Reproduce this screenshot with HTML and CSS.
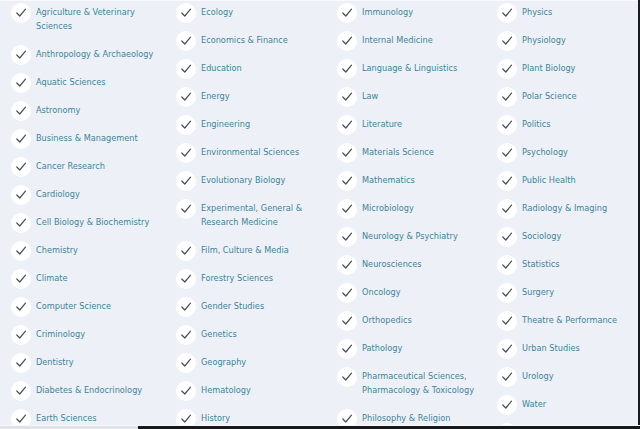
FILE: index.html
```html
<!DOCTYPE html>
<html>
<head>
<meta charset="utf-8">
<link rel="stylesheet" href="styles.css">
</head>
<body>
<div class="frame">
  <div class="viewport">
    <div class="grid">
      <ul class="col">
        <li><span class="tick"><svg viewBox="0 0 20 20"><path d="M5.8 10 L8.8 13 L14.5 6.2"/></svg></span><span class="label">Agriculture &amp; Veterinary Sciences</span></li>
        <li><span class="tick"><svg viewBox="0 0 20 20"><path d="M5.8 10 L8.8 13 L14.5 6.2"/></svg></span><span class="label">Anthropology &amp; Archaeology</span></li>
        <li><span class="tick"><svg viewBox="0 0 20 20"><path d="M5.8 10 L8.8 13 L14.5 6.2"/></svg></span><span class="label">Aquatic Sciences</span></li>
        <li><span class="tick"><svg viewBox="0 0 20 20"><path d="M5.8 10 L8.8 13 L14.5 6.2"/></svg></span><span class="label">Astronomy</span></li>
        <li><span class="tick"><svg viewBox="0 0 20 20"><path d="M5.8 10 L8.8 13 L14.5 6.2"/></svg></span><span class="label">Business &amp; Management</span></li>
        <li><span class="tick"><svg viewBox="0 0 20 20"><path d="M5.8 10 L8.8 13 L14.5 6.2"/></svg></span><span class="label">Cancer Research</span></li>
        <li><span class="tick"><svg viewBox="0 0 20 20"><path d="M5.8 10 L8.8 13 L14.5 6.2"/></svg></span><span class="label">Cardiology</span></li>
        <li><span class="tick"><svg viewBox="0 0 20 20"><path d="M5.8 10 L8.8 13 L14.5 6.2"/></svg></span><span class="label">Cell Biology &amp; Biochemistry</span></li>
        <li><span class="tick"><svg viewBox="0 0 20 20"><path d="M5.8 10 L8.8 13 L14.5 6.2"/></svg></span><span class="label">Chemistry</span></li>
        <li><span class="tick"><svg viewBox="0 0 20 20"><path d="M5.8 10 L8.8 13 L14.5 6.2"/></svg></span><span class="label">Climate</span></li>
        <li><span class="tick"><svg viewBox="0 0 20 20"><path d="M5.8 10 L8.8 13 L14.5 6.2"/></svg></span><span class="label">Computer Science</span></li>
        <li><span class="tick"><svg viewBox="0 0 20 20"><path d="M5.8 10 L8.8 13 L14.5 6.2"/></svg></span><span class="label">Criminology</span></li>
        <li><span class="tick"><svg viewBox="0 0 20 20"><path d="M5.8 10 L8.8 13 L14.5 6.2"/></svg></span><span class="label">Dentistry</span></li>
        <li><span class="tick"><svg viewBox="0 0 20 20"><path d="M5.8 10 L8.8 13 L14.5 6.2"/></svg></span><span class="label">Diabetes &amp; Endocrinology</span></li>
        <li><span class="tick"><svg viewBox="0 0 20 20"><path d="M5.8 10 L8.8 13 L14.5 6.2"/></svg></span><span class="label">Earth Sciences</span></li>
      </ul>
      <ul class="col">
        <li><span class="tick"><svg viewBox="0 0 20 20"><path d="M5.8 10 L8.8 13 L14.5 6.2"/></svg></span><span class="label">Ecology</span></li>
        <li><span class="tick"><svg viewBox="0 0 20 20"><path d="M5.8 10 L8.8 13 L14.5 6.2"/></svg></span><span class="label">Economics &amp; Finance</span></li>
        <li><span class="tick"><svg viewBox="0 0 20 20"><path d="M5.8 10 L8.8 13 L14.5 6.2"/></svg></span><span class="label">Education</span></li>
        <li><span class="tick"><svg viewBox="0 0 20 20"><path d="M5.8 10 L8.8 13 L14.5 6.2"/></svg></span><span class="label">Energy</span></li>
        <li><span class="tick"><svg viewBox="0 0 20 20"><path d="M5.8 10 L8.8 13 L14.5 6.2"/></svg></span><span class="label">Engineering</span></li>
        <li><span class="tick"><svg viewBox="0 0 20 20"><path d="M5.8 10 L8.8 13 L14.5 6.2"/></svg></span><span class="label">Environmental Sciences</span></li>
        <li><span class="tick"><svg viewBox="0 0 20 20"><path d="M5.8 10 L8.8 13 L14.5 6.2"/></svg></span><span class="label">Evolutionary Biology</span></li>
        <li><span class="tick"><svg viewBox="0 0 20 20"><path d="M5.8 10 L8.8 13 L14.5 6.2"/></svg></span><span class="label">Experimental, General &amp; Research Medicine</span></li>
        <li><span class="tick"><svg viewBox="0 0 20 20"><path d="M5.8 10 L8.8 13 L14.5 6.2"/></svg></span><span class="label">Film, Culture &amp; Media</span></li>
        <li><span class="tick"><svg viewBox="0 0 20 20"><path d="M5.8 10 L8.8 13 L14.5 6.2"/></svg></span><span class="label">Forestry Sciences</span></li>
        <li><span class="tick"><svg viewBox="0 0 20 20"><path d="M5.8 10 L8.8 13 L14.5 6.2"/></svg></span><span class="label">Gender Studies</span></li>
        <li><span class="tick"><svg viewBox="0 0 20 20"><path d="M5.8 10 L8.8 13 L14.5 6.2"/></svg></span><span class="label">Genetics</span></li>
        <li><span class="tick"><svg viewBox="0 0 20 20"><path d="M5.8 10 L8.8 13 L14.5 6.2"/></svg></span><span class="label">Geography</span></li>
        <li><span class="tick"><svg viewBox="0 0 20 20"><path d="M5.8 10 L8.8 13 L14.5 6.2"/></svg></span><span class="label">Hematology</span></li>
        <li><span class="tick"><svg viewBox="0 0 20 20"><path d="M5.8 10 L8.8 13 L14.5 6.2"/></svg></span><span class="label">History</span></li>
      </ul>
      <ul class="col">
        <li><span class="tick"><svg viewBox="0 0 20 20"><path d="M5.8 10 L8.8 13 L14.5 6.2"/></svg></span><span class="label">Immunology</span></li>
        <li><span class="tick"><svg viewBox="0 0 20 20"><path d="M5.8 10 L8.8 13 L14.5 6.2"/></svg></span><span class="label">Internal Medicine</span></li>
        <li><span class="tick"><svg viewBox="0 0 20 20"><path d="M5.8 10 L8.8 13 L14.5 6.2"/></svg></span><span class="label">Language &amp; Linguistics</span></li>
        <li><span class="tick"><svg viewBox="0 0 20 20"><path d="M5.8 10 L8.8 13 L14.5 6.2"/></svg></span><span class="label">Law</span></li>
        <li><span class="tick"><svg viewBox="0 0 20 20"><path d="M5.8 10 L8.8 13 L14.5 6.2"/></svg></span><span class="label">Literature</span></li>
        <li><span class="tick"><svg viewBox="0 0 20 20"><path d="M5.8 10 L8.8 13 L14.5 6.2"/></svg></span><span class="label">Materials Science</span></li>
        <li><span class="tick"><svg viewBox="0 0 20 20"><path d="M5.8 10 L8.8 13 L14.5 6.2"/></svg></span><span class="label">Mathematics</span></li>
        <li><span class="tick"><svg viewBox="0 0 20 20"><path d="M5.8 10 L8.8 13 L14.5 6.2"/></svg></span><span class="label">Microbiology</span></li>
        <li><span class="tick"><svg viewBox="0 0 20 20"><path d="M5.8 10 L8.8 13 L14.5 6.2"/></svg></span><span class="label">Neurology &amp; Psychiatry</span></li>
        <li><span class="tick"><svg viewBox="0 0 20 20"><path d="M5.8 10 L8.8 13 L14.5 6.2"/></svg></span><span class="label">Neurosciences</span></li>
        <li><span class="tick"><svg viewBox="0 0 20 20"><path d="M5.8 10 L8.8 13 L14.5 6.2"/></svg></span><span class="label">Oncology</span></li>
        <li><span class="tick"><svg viewBox="0 0 20 20"><path d="M5.8 10 L8.8 13 L14.5 6.2"/></svg></span><span class="label">Orthopedics</span></li>
        <li><span class="tick"><svg viewBox="0 0 20 20"><path d="M5.8 10 L8.8 13 L14.5 6.2"/></svg></span><span class="label">Pathology</span></li>
        <li><span class="tick"><svg viewBox="0 0 20 20"><path d="M5.8 10 L8.8 13 L14.5 6.2"/></svg></span><span class="label">Pharmaceutical Sciences, Pharmacology &amp; Toxicology</span></li>
        <li><span class="tick"><svg viewBox="0 0 20 20"><path d="M5.8 10 L8.8 13 L14.5 6.2"/></svg></span><span class="label">Philosophy &amp; Religion</span></li>
      </ul>
      <ul class="col">
        <li><span class="tick"><svg viewBox="0 0 20 20"><path d="M5.8 10 L8.8 13 L14.5 6.2"/></svg></span><span class="label">Physics</span></li>
        <li><span class="tick"><svg viewBox="0 0 20 20"><path d="M5.8 10 L8.8 13 L14.5 6.2"/></svg></span><span class="label">Physiology</span></li>
        <li><span class="tick"><svg viewBox="0 0 20 20"><path d="M5.8 10 L8.8 13 L14.5 6.2"/></svg></span><span class="label">Plant Biology</span></li>
        <li><span class="tick"><svg viewBox="0 0 20 20"><path d="M5.8 10 L8.8 13 L14.5 6.2"/></svg></span><span class="label">Polar Science</span></li>
        <li><span class="tick"><svg viewBox="0 0 20 20"><path d="M5.8 10 L8.8 13 L14.5 6.2"/></svg></span><span class="label">Politics</span></li>
        <li><span class="tick"><svg viewBox="0 0 20 20"><path d="M5.8 10 L8.8 13 L14.5 6.2"/></svg></span><span class="label">Psychology</span></li>
        <li><span class="tick"><svg viewBox="0 0 20 20"><path d="M5.8 10 L8.8 13 L14.5 6.2"/></svg></span><span class="label">Public Health</span></li>
        <li><span class="tick"><svg viewBox="0 0 20 20"><path d="M5.8 10 L8.8 13 L14.5 6.2"/></svg></span><span class="label">Radiology &amp; Imaging</span></li>
        <li><span class="tick"><svg viewBox="0 0 20 20"><path d="M5.8 10 L8.8 13 L14.5 6.2"/></svg></span><span class="label">Sociology</span></li>
        <li><span class="tick"><svg viewBox="0 0 20 20"><path d="M5.8 10 L8.8 13 L14.5 6.2"/></svg></span><span class="label">Statistics</span></li>
        <li><span class="tick"><svg viewBox="0 0 20 20"><path d="M5.8 10 L8.8 13 L14.5 6.2"/></svg></span><span class="label">Surgery</span></li>
        <li><span class="tick"><svg viewBox="0 0 20 20"><path d="M5.8 10 L8.8 13 L14.5 6.2"/></svg></span><span class="label">Theatre &amp; Performance</span></li>
        <li><span class="tick"><svg viewBox="0 0 20 20"><path d="M5.8 10 L8.8 13 L14.5 6.2"/></svg></span><span class="label">Urban Studies</span></li>
        <li><span class="tick"><svg viewBox="0 0 20 20"><path d="M5.8 10 L8.8 13 L14.5 6.2"/></svg></span><span class="label">Urology</span></li>
        <li><span class="tick"><svg viewBox="0 0 20 20"><path d="M5.8 10 L8.8 13 L14.5 6.2"/></svg></span><span class="label">Water</span></li>
        <li><span class="tick"><svg viewBox="0 0 20 20"><path d="M5.8 10 L8.8 13 L14.5 6.2"/></svg></span></li>
      </ul>
    </div>
  </div>
  <div class="edge-right"></div>
</div>
<div class="edge-bottom">
  <div class="edge-bottom-light"></div>
  <div class="edge-bottom-dark"></div>
</div>
</body>
</html>
```

FILE: styles.css
```css
html, body {
  margin: 0;
  padding: 0;
  width: 640px;
  height: 429px;
  overflow: hidden;
  background: #edf1f7;
}

.frame {
  display: flex;
  height: 425px;
}

.viewport {
  flex: 1;
  height: 425px;
  overflow: hidden;
  border-top: 1px solid #f7f9fc;
  box-sizing: border-box;
  background: #edf1f7;
}

.edge-right {
  width: 2px;
  background: #1a1c20;
}

.edge-bottom {
  display: flex;
  height: 4px;
  border-top: 1px solid #f6f8fb;
  box-sizing: border-box;
}

.edge-bottom-light {
  width: 138px;
  background: #dfe3e8;
}

.edge-bottom-dark {
  flex: 1;
  background: #16181b;
}

.grid {
  display: grid;
  grid-template-columns: 165px 161px 160px 1fr;
  padding-left: 11px;
  margin-top: -3px;
}

.col {
  list-style: none;
  margin: 0;
  padding: 0;
}

.col li {
  display: flex;
  align-items: flex-start;
  padding: 7px 0;
  min-height: 14px;
}

.tick {
  flex: none;
  width: 20px;
  height: 20px;
  margin-top: -2px;
  margin-bottom: -4px;
  border-radius: 50%;
  background: #ffffff;
  display: flex;
}

.tick svg {
  width: 20px;
  height: 20px;
}

.tick path {
  fill: none;
  stroke: #4b4e53;
  stroke-width: 1.2;
  stroke-linecap: round;
  stroke-linejoin: round;
}

.label {
  margin-left: 5px;
  font-family: "DejaVu Sans", sans-serif;
  font-size: 8.2px;
  line-height: 14px;
  color: #3f8398;
  width: 124px;
}
```
